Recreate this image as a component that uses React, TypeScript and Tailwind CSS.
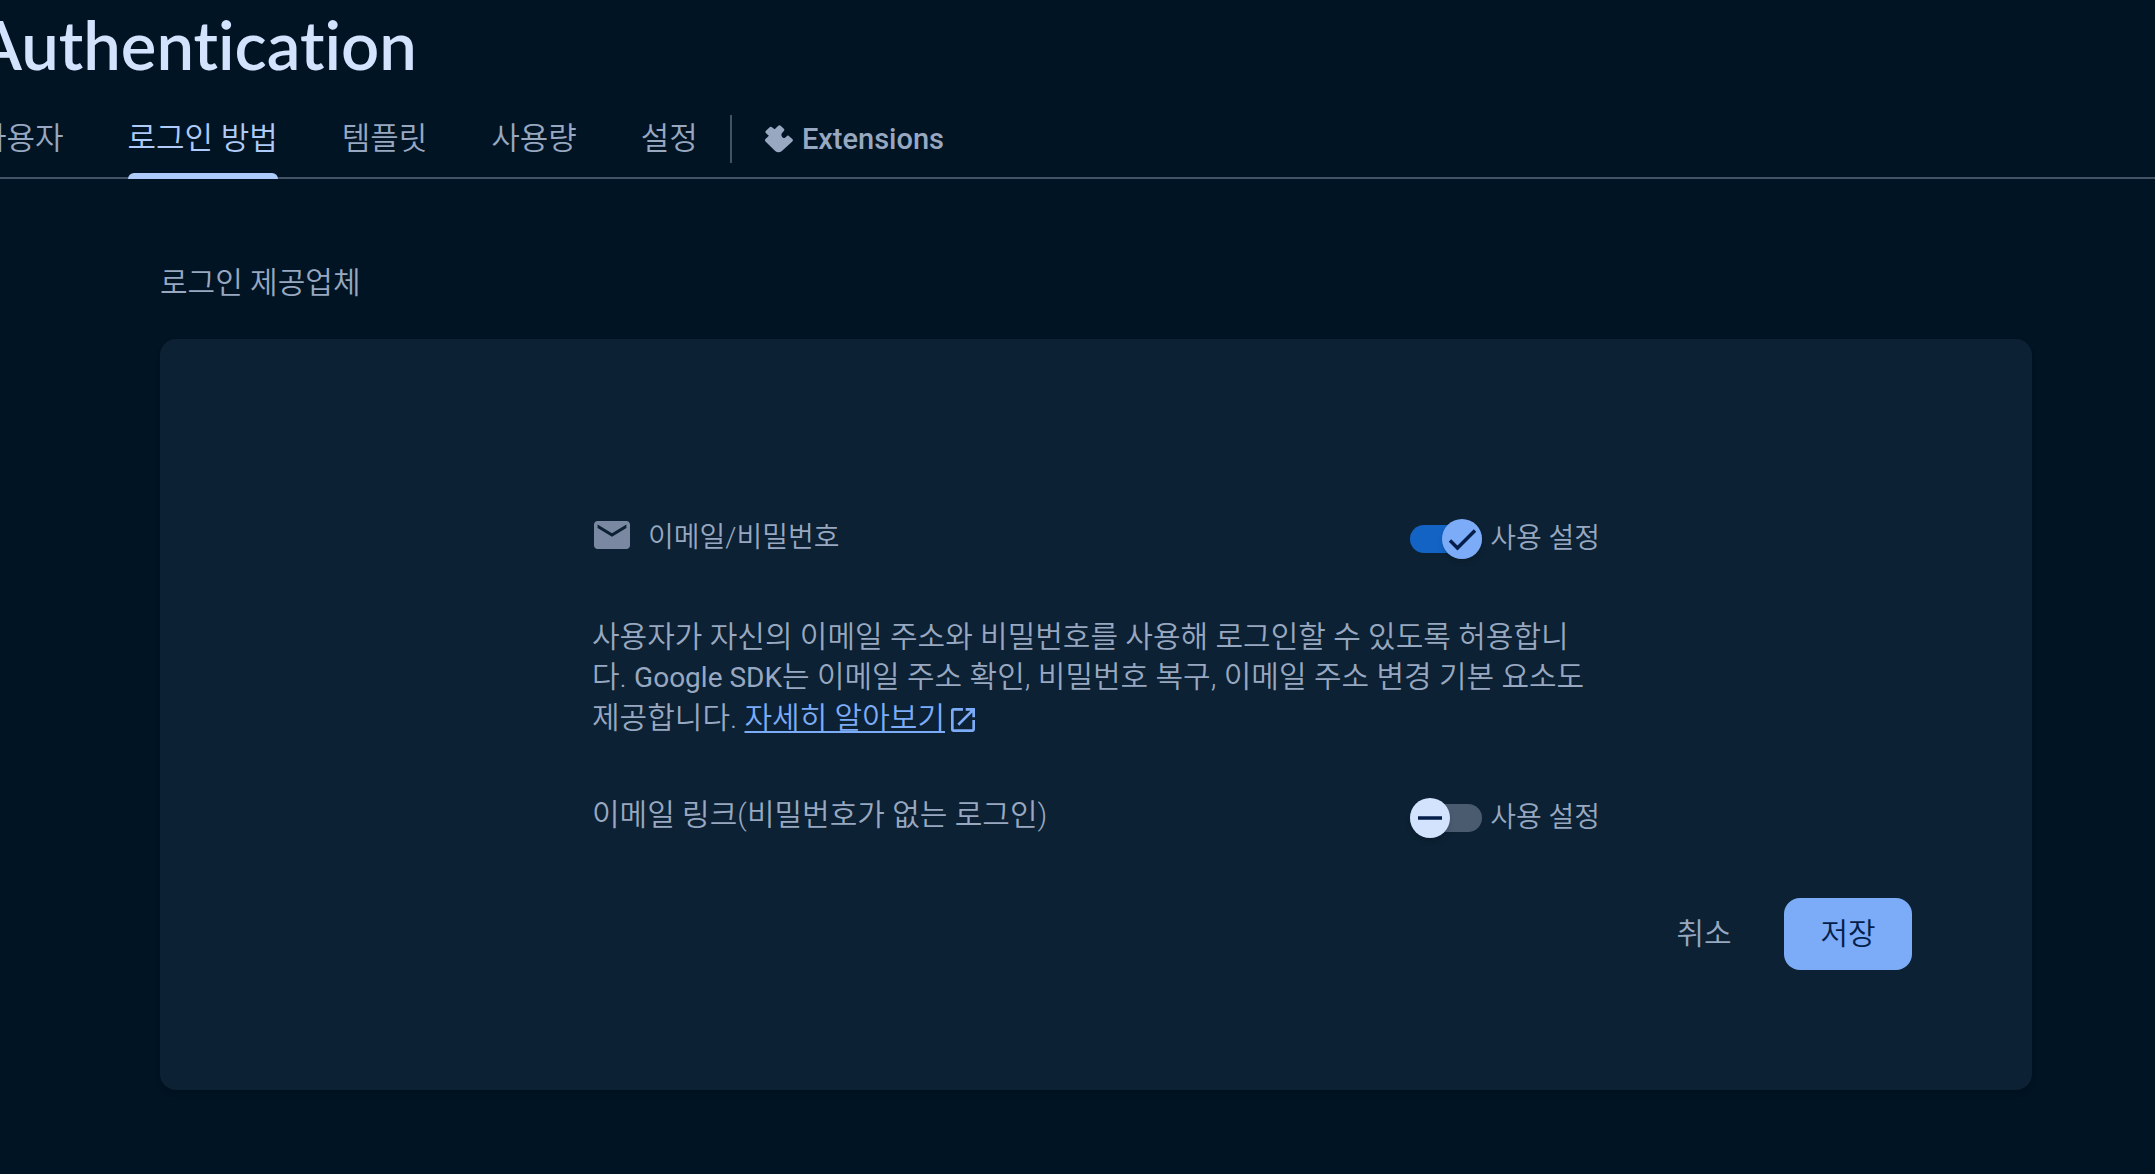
import { useState } from "react";
import { MdOpenInNew } from "react-icons/md";

const tabs = ["사용자", "로그인 방법", "템플릿", "사용량", "설정"];

function ExtensionIcon() {
  return (
    <svg viewBox="0 0 30 29" className="h-7 w-7.5 shrink-0" fill="currentColor" aria-hidden="true">
      <path d="M1.500 6L5 2.500Q6.500 1.200 8 2.500L10.500 4.500L14 1Q15.500 -0.300 17 1L20 4Q21 5.200 20 6.300L18 8.500Q17 10 18 12Q19.500 14.500 21.500 13L24.300 10.500L28.800 14.500Q30 15.700 28.800 17L18 27Q14.500 29.500 11 27L1 17Q-0.200 15.700 1 14.500L4.500 11.200L1.500 8.500Q0.300 7.300 1.500 6Z" />
    </svg>
  );
}

function MailIcon() {
  return (
    <svg viewBox="2 4 20 16" className="mb-1.5 h-7 w-9 shrink-0 text-[#7a89a1]" preserveAspectRatio="none" fill="currentColor" aria-hidden="true">
      <path d="M20 4H4c-1.100 0-1.990.9-1.990 2L2 18c0 1.100.9 2 2 2h16c1.100 0 2-.9 2-2V6c0-1.100-.9-2-2-2zm0 4l-8 5-8-5V6l8 5 8-5v2z" />
    </svg>
  );
}

function Toggle({ id, initial, label }: { id: string; initial: boolean; label: string }) {
  const [on, setOn] = useState(initial);
  return (
    <label htmlFor={id} className="flex cursor-pointer items-center gap-2">
      <input
        id={id}
        type="checkbox"
        role="switch"
        checked={on}
        onChange={() => setOn(!on)}
        className="sr-only"
      />
      <span className={`flex h-7 w-18 items-center rounded-full ${on ? "justify-end bg-[#1263c3]" : "justify-start bg-[#4a5b70]"}`}>
        <span className={`flex size-10 shrink-0 items-center justify-center rounded-full shadow-md ${on ? "bg-[#7cacf8]" : "bg-[#d3e3fd]"}`}>
          <svg viewBox="0 0 40 40" className="size-10" fill="none" stroke="#041e49" strokeWidth="3.500" aria-hidden="true">
            {on ? <path d="M8 21.500L15.500 29L33 11.500" /> : <path d="M8 20H32" />}
          </svg>
        </span>
      </span>
      <span className="text-[28px] leading-10">{label}</span>
    </label>
  );
}

export default function App() {
  return (
    <div className="min-h-screen overflow-hidden bg-[#011423] pb-20 font-['Roboto','Noto_Sans_CJK_KR',sans-serif] text-[30px] leading-10 font-[350] text-[#98a8c1]">
      <header className="border-b-2 border-[#435265]">
        <h1 className="-ml-6 pt-1 pb-1 font-['Lato','Noto_Sans_CJK_KR',sans-serif] text-[67px] leading-20 font-semibold text-[#d3e3fd] [font-variant-ligatures:none]">
          Authentication
        </h1>
        <nav className="-mb-0.5 -ml-13.5 flex items-stretch pt-4 text-[31px]">
          {tabs.map((tab) => {
            const active = tab === "로그인 방법";
            return (
              <a
                key={tab}
                href="#"
                aria-current={active ? "page" : undefined}
                className={`flex h-[75px] flex-col justify-between px-8 pt-[15px] whitespace-nowrap ${active ? "text-[#aecbfa]" : ""}`}
              >
                {tab}
                {active && <span className="h-1.5 rounded-t-md bg-[#aecbfa]" />}
              </a>
            );
          })}
          <a href="#" className="mt-[11px] flex h-12 items-center gap-2 border-l-2 border-[#435265] pl-8 text-[29px] font-medium">
            <ExtensionIcon />
            Extensions
          </a>
        </nav>
      </header>

      <main className="mt-21 mr-[123px] ml-40">
        <h2>로그인 제공업체</h2>
        <form
          onSubmit={(event) => event.preventDefault()}
          className="mt-9 rounded-2xl bg-[#0c2133] pt-[178px] pb-30 shadow-md"
        >
          <div className="mx-auto max-w-252">
            <div className="flex h-11 items-center justify-between">
              <div className="flex items-center gap-4.5 pb-0.5 pl-0.5">
                <MailIcon />
                <span className="text-[28px]">이메일/비밀번호</span>
              </div>
              <Toggle id="email-password" initial={true} label="사용 설정" />
            </div>
            <p className="mt-14 break-all">
              사용자가 자신의 이메일 주소와 비밀번호를 사용해 로그인할 수 있도록 허용합니다. <span className="text-[28px] font-normal">Google SDK</span>는 이메일 주소 확인, 비밀번호 복구, 이메일 주소 변경 기본 요소도 제공합니다.{" "}
              <a href="#" className="text-[#7cacf8] underline decoration-2 underline-offset-3 [text-decoration-skip-ink:none]">
                자세히 알아보기
                <MdOpenInNew className="ml-0.5 inline size-8" aria-hidden="true" />
              </a>
            </p>
            <div className="mt-14 flex h-12 items-center justify-between">
              <span className="pb-1.5">이메일 링크(비밀번호가 없는 로그인)</span>
              <Toggle id="email-link" initial={false} label="사용 설정" />
            </div>
          </div>
          <div className="mt-14 mr-30 flex items-center justify-end gap-4">
            <button type="button" className="h-18 w-32 rounded-2xl">취소</button>
            <button type="submit" className="h-18 w-32 rounded-2xl bg-[#7cacf8] text-[#041e49]">저장</button>
          </div>
        </form>
      </main>
    </div>
  );
}
